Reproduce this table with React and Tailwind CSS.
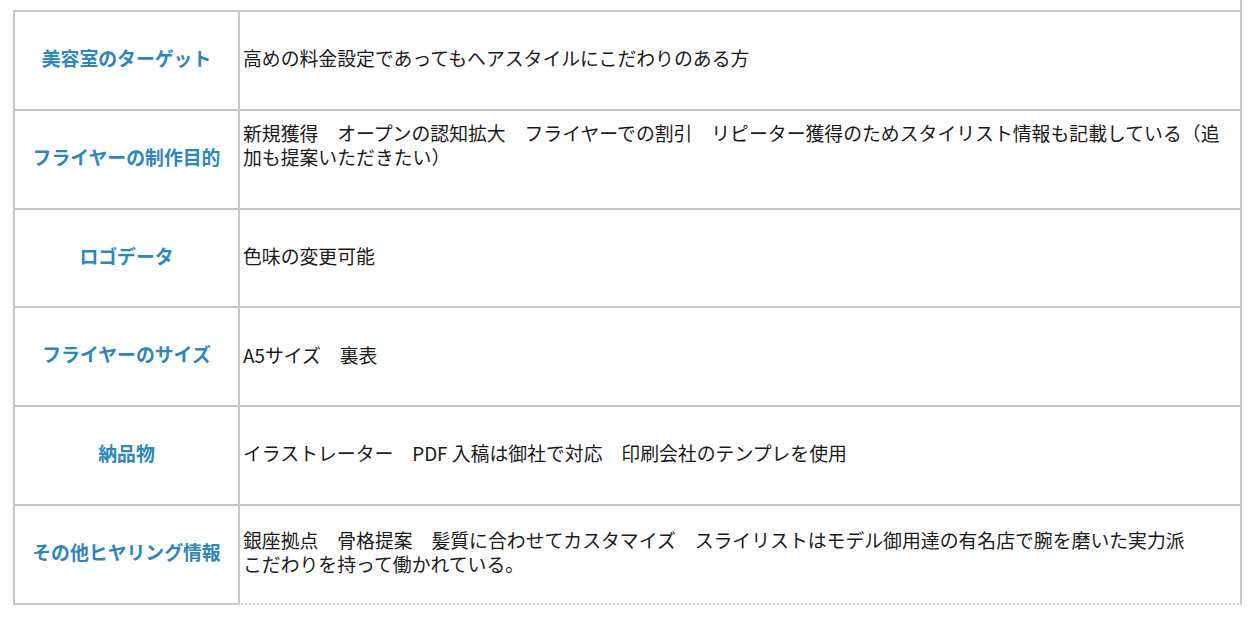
const rows = [
  { label: '美容室のターゲット', lines: ['高めの料金設定であってもヘアスタイルにこだわりのある方'] },
  {
    label: 'フライヤーの制作目的',
    lines: [
      '新規獲得　オープンの認知拡大　フライヤーでの割引　リピーター獲得のためスタイリスト情報も記載している（追',
      '加も提案いただきたい）',
      '\u00a0',
    ],
  },
  { label: 'ロゴデータ', lines: ['色味の変更可能'] },
  { label: 'フライヤーのサイズ', lines: ['A5サイズ　裏表'] },
  { label: '納品物', lines: ['イラストレーター　PDF 入稿は御社で対応　印刷会社のテンプレを使用'] },
  {
    label: 'その他ヒヤリング情報',
    lines: [
      '銀座拠点　骨格提案　髪質に合わせてカスタマイズ　スライリストはモデル御用達の有名店で腕を磨いた実力派',
      'こだわりを持って働かれている。',
    ],
  },
];

const App = () => {
  return (
    <div className="w-[1250px] h-[629px] bg-white overflow-hidden font-['Noto_Sans_CJK_JP','Noto_Sans',sans-serif]">
      <div className="ml-[13px] w-[1229px] h-[10px] border-r-2 border-[#c8c8c8]" />
      <div className="ml-[13px] w-[1229px] border-l-2 border-r-2 border-[#c8c8c8]">
        {rows.map((row, i) => (
          <div key={i} className="grid grid-cols-[223px_1fr] h-[98.75px] border-t-2 border-[#c8c8c8]">
            <div className="flex items-center justify-center pb-[4px] text-[18.85px] font-bold text-[#2e86bb] whitespace-nowrap">
              {row.label}
            </div>
            <div className="flex flex-col justify-center pb-[4px] border-l-2 border-[#c8c8c8] pl-[3px] text-[18.85px] leading-[24px] text-[#1a1a1a]">
              {row.lines.map((line, j) => (
                <div key={j} className="whitespace-nowrap">{line}</div>
              ))}
            </div>
          </div>
        ))}
      </div>
      <div className="ml-[13px] w-[1229px] grid grid-cols-[225px_1fr]">
        <div className="border-t-2 border-[#c8c8c8]" />
        <div className="border-t-2 border-dotted border-[#d4d4d4]" />
      </div>
    </div>
  );
};

export default App;
